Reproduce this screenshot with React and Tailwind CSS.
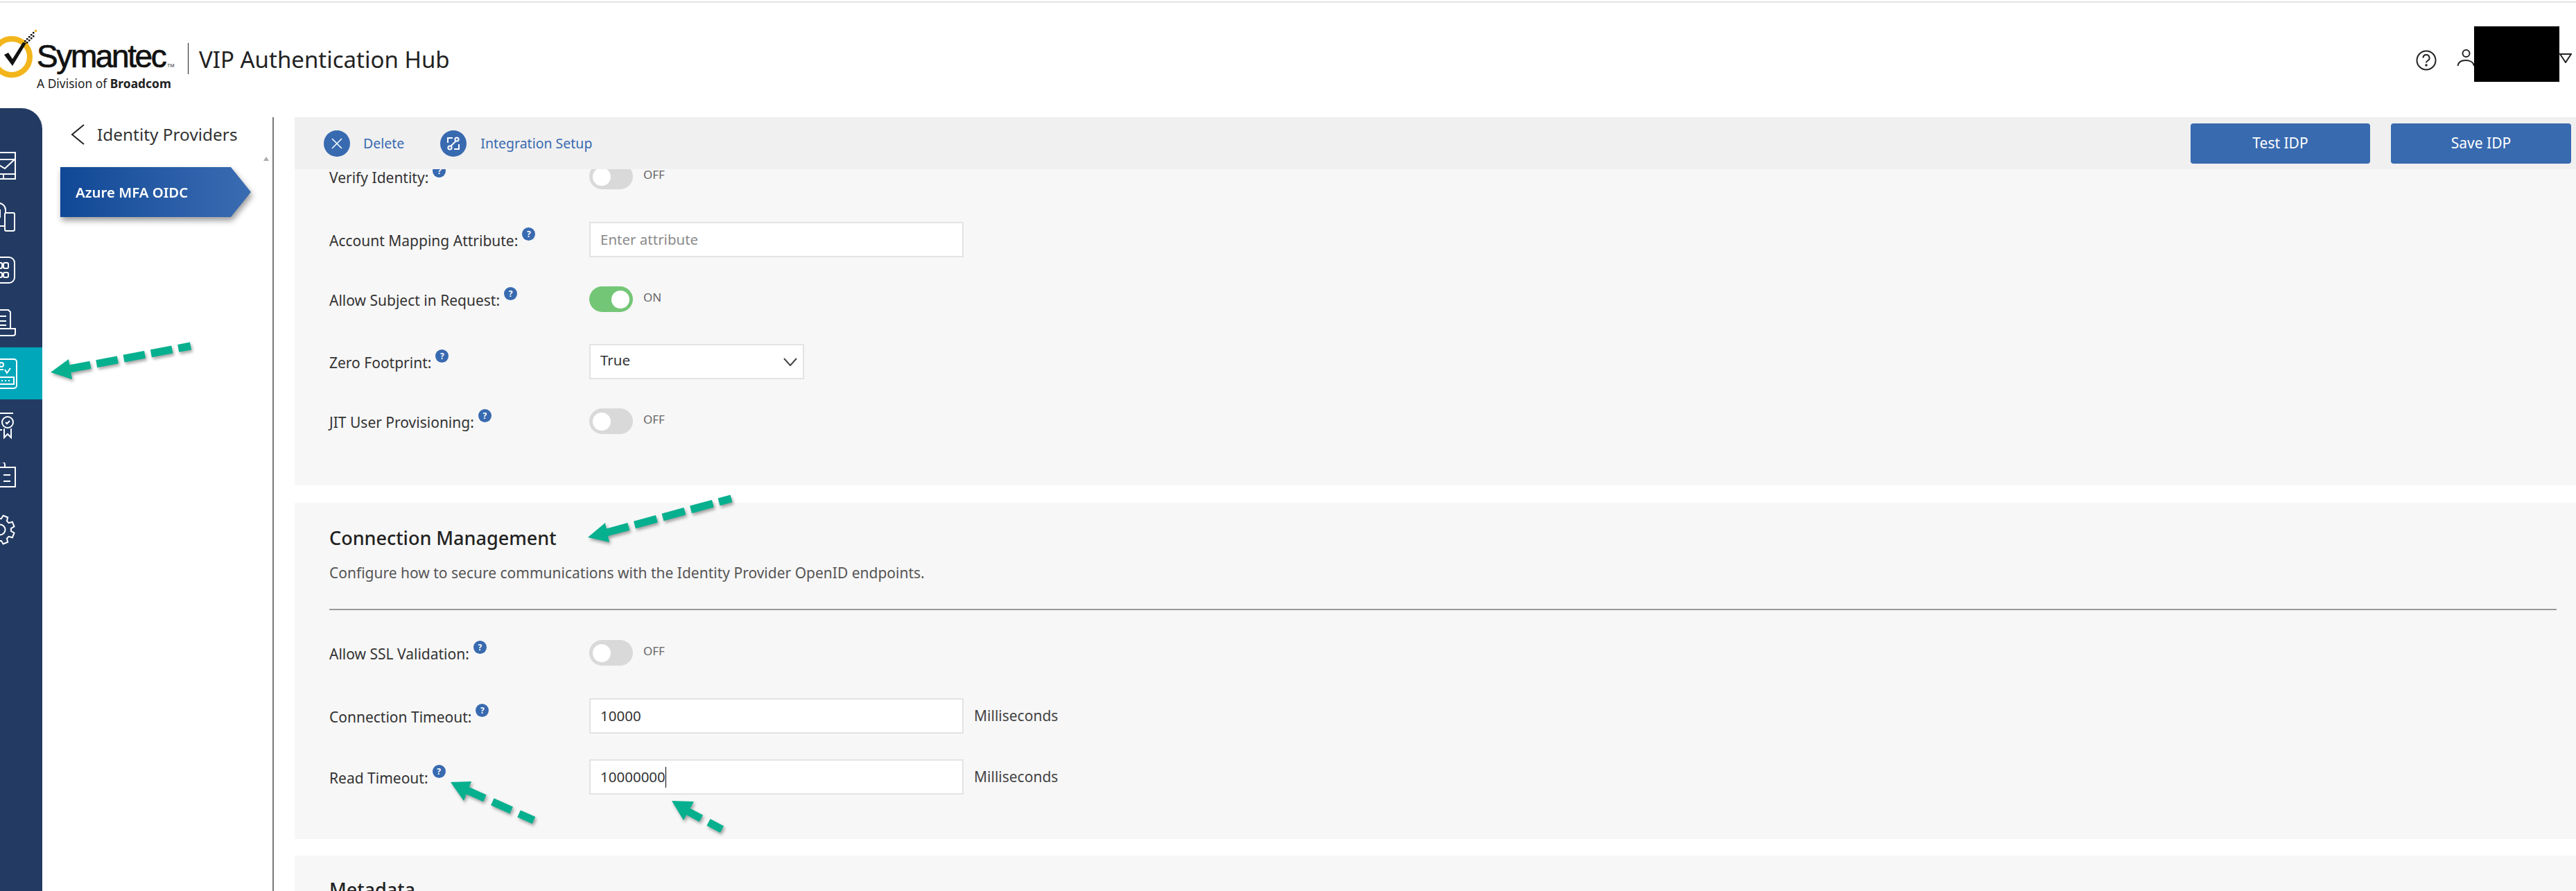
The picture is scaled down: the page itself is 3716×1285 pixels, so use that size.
import React from "react";

const font = { fontFamily: '"Noto Sans", sans-serif' };

const Help = ({ className = "" }) => (
  <span className={`inline-flex h-[19px] w-[19px] shrink-0 items-center justify-center rounded-full bg-[#386ab0] text-[12px] font-bold leading-none text-white ${className}`}>?</span>
);

const Toggle = ({ on }) => (
  <div className="flex items-start gap-[15px]">
    <div className={`flex h-[37px] w-[63px] items-center rounded-full px-[5px] ${on ? "justify-end bg-[#74c677]" : "bg-[#d9d9d9]"}`}>
      <div className="h-[26px] w-[26px] rounded-full bg-white" />
    </div>
    <span className="mt-[6px] text-[17px] leading-[20px] text-[#666]">{on ? "ON" : "OFF"}</span>
  </div>
);

const Field = ({ value, placeholder, unit, caret }) => (
  <div className="flex items-center gap-[15px]">
    <div className={`flex h-[51px] w-[540px] items-center border-2 border-[#e3e3e3] bg-white pl-[14px] text-[20.5px] ${value ? "text-[#333]" : "text-[#8a8a8a]"}`}>
      {value || placeholder}
      {caret && <span className="h-[30px] w-px bg-black" />}
    </div>
    {unit && <span className="text-[21px] text-[#444]">{unit}</span>}
  </div>
);

// label column is fixed so every control starts at the same x
const Row = ({ label, top, children }) => (
  <div className={`flex h-[51px] items-center ${top}`}>
    <div className="flex w-[375px] shrink-0 items-center pt-[4px]">
      <span className="text-[21px] text-[#333]">{label}</span>
      <Help className="mb-[20px] ml-[6px]" />
    </div>
    {children}
  </div>
);

const tail = [[35, 58], [38, 60], [38, 55], [41, 57], [41, 52], [44, 54], [44, 49], [47, 51], [47, 46]];

const Logo = () => (
  <div className="mt-[30px] flex items-center">
    <svg width="53" height="76" viewBox="0 42 53 76" className="-mt-[26px] shrink-0">
      <circle cx="17" cy="82" r="26" fill="none" stroke="#f2b51b" strokeWidth="8" />
      <path d="M6 79l6-3 6 9 15-24 5 1-20 33z" fill="#111" />
      {tail.map(([x, y]) => (
        <rect key={`${x}-${y}`} x={x} y={y} width="2.5" height="2.5" fill="#111" />
      ))}
      <rect x="50" y="43" width="3" height="3" fill="#f2b51b" />
    </svg>
    <div className="flex w-[218px] flex-col">
      <div className="flex items-start">
        <span className="text-[46px] leading-[50px] tracking-[-2.4px] text-[#111] [-webkit-text-stroke:0.7px_#111]" style={{ fontFamily: '"Liberation Sans", sans-serif' }}>Symantec</span>
        <span className="ml-[3px] mt-[34px] text-[7px] text-[#333]">TM</span>
      </div>
      <div className="mt-[4px] text-[17.4px] leading-[20px] text-[#222]">A Division of <b>Broadcom</b></div>
    </div>
    <div className="mb-[17px] h-[45px] w-px bg-[#222]" />
    <div className="mb-[16px] ml-[15px] text-[33px] leading-none text-[#222]">VIP Authentication Hub</div>
  </div>
);

// gear outline for the settings icon, centred on the rail's left edge
const gearPath = Array.from({ length: 8 }, (_, i) => {
  const pt = (r, a) => `${(r * Math.cos(a)).toFixed(1)} ${(22 + r * Math.sin(a)).toFixed(1)}`;
  const a = (i * Math.PI) / 4 + Math.PI / 8;
  const w = 0.17;
  return `${i === 0 ? "M" : "L"}${pt(16, a - w * 1.6)}L${pt(21, a - w)}L${pt(21, a + w)}L${pt(16, a + w * 1.6)}`;
}).join("") + "Z";

// drawn with x = page x, so the part left of 0 is cut off by the window
const icons = [
  <><path d="M-5 3H22V41H-5M-5 13H22M-5 19L7 26L22 12M-5 34H22M5 34V41" /></>,
  <><path d="M-3 1A10 10 0 0 1 8 11V15M0 10V22M-5 34H7" /><rect x="7" y="15" width="14" height="26" rx="2" /></>,
  <><path d="M-5 4H13a8 8 0 0 1 8 8V33a8 8 0 0 1-8 8H-5" /><rect x="5" y="12" width="7" height="8" rx="2" /><rect x="5" y="26" width="7" height="7" rx="2" /><rect x="-4" y="12" width="7" height="8" rx="2" /><rect x="-4" y="26" width="7" height="7" rx="2" /></>,
  <><path d="M-5 5H12l3 3V32M-5 32H22V39a3 3 0 0 1-3 3H-5M-5 14H9M-5 21H9M-5 27H9" /></>,
  <><path d="M-5 1H20a4 4 0 0 1 4 4V39a4 4 0 0 1-4 4H-5" /><circle cx="2" cy="9" r="3" /><path d="M-5 16H5M7 16l3 5 5-7" /><path d="M-5 27H20V37H-5" /><path d="M2 32h2M7 32h2M12 32h2" /></>,
  <><path d="M-5 4H19M-5 28H3" /><circle cx="11" cy="17" r="8" /><path d="M8 17l2 2 4-4M6 26V39L11 34L16 39V26" /></>,
  <><path d="M-3 7V3a5 4 0 0 1 10 0V7M-5 7H22V35H-5M5 18H15M5 27H15" /></>,
  <><circle cx="0" cy="22" r="7.5" /><path d="M0 0" /><path d={gearPath} /></>,
];

const NavItem = ({ icon, active }) => (
  <div className={`flex h-[75px] items-center overflow-hidden ${active ? "bg-[#00a7bb]" : ""}`}>
    <svg width="40" height="44" viewBox="-15 0 40 44" fill="none" stroke="#fff" strokeWidth="2" className="-ml-[15px] shrink-0">{icon}</svg>
  </div>
);

const Arrow = ({ line, head, dash }) => (
  <g className="drop-shadow-[2px_3px_2px_rgba(0,0,0,0.35)]">
    <path d={line} stroke="#06b08f" strokeWidth="11" fill="none" strokeDasharray={dash} />
    <polygon points={head} fill="#06b08f" />
  </g>
);

export default function App() {
  return (
    <div className="relative h-[1285px] w-[3716px] overflow-hidden bg-white" style={font}>
      <div className="mt-[2px] h-[2px] bg-[#e3e3e3]" />

      {/* top bar */}
      <div className="flex h-[152px] items-center justify-between pb-[4px] pr-[6px]">
        <Logo />
        <div className="flex items-center">
          <svg width="30" height="30" viewBox="0 0 30 30" fill="none" stroke="#222" strokeWidth="2" className="mt-[18px]">
            <circle cx="15" cy="15" r="13.5" />
            <path d="M10.5 11.5a4.5 4.5 0 1 1 6.5 4c-1.4.8-2 1.6-2 3" />
            <circle cx="15" cy="22" r=".8" fill="#222" />
          </svg>
          <svg width="25" height="26" viewBox="0 0 25 26" fill="none" stroke="#222" strokeWidth="2" className="ml-[29px] mt-[12px]">
            <circle cx="13.5" cy="6" r="5" />
            <path d="M1.5 24C2 19 6 16 13 16C18 16 24 18 25 24" />
          </svg>
          <div className="h-[80px] w-[123px] bg-black" />
          <svg width="18" height="14" viewBox="0 0 18 14" fill="none" stroke="#222" strokeWidth="2" className="mt-[11px]">
            <path d="M1 1h16L9 13z" />
          </svg>
        </div>
      </div>

      <div className="flex h-[1129px]">
        {/* icon rail */}
        <div className="w-[61px] shrink-0 rounded-tr-[30px] bg-[#233b63] pt-[45px]">
          {icons.map((icon, i) => (
            <NavItem key={i} icon={icon} active={i === 4} />
          ))}
        </div>

        {/* provider list */}
        <div className="mt-[13px] w-[334px] shrink-0 border-r-2 border-[#777]">
          <div className="flex h-[50px] items-center pl-[41px]">
            <svg width="20" height="30" viewBox="0 0 20 30" fill="none" stroke="#222" strokeWidth="2"><path d="M19 1L2 15l17 14" /></svg>
            <span className="ml-[18px] text-[24.4px] text-[#333]">Identity Providers</span>
          </div>
          <div className="flex h-[22px] items-start justify-end pr-[5px] pt-[7px]">
            <div className="h-0 w-0 border-x-[4px] border-b-[6px] border-x-transparent border-b-[#aaa]" />
          </div>
          <div className="ml-[26px] drop-shadow-[2px_5px_4px_rgba(0,0,0,0.4)]">
            <div className="flex h-[72px] w-[275px] items-center bg-gradient-to-r from-[#0f4896] to-[#3a6cb2] pl-[22px] text-[20.4px] font-semibold text-white [clip-path:polygon(0_0,246px_0,100%_50%,246px_100%,0_100%)]">
              Azure MFA OIDC
            </div>
          </div>
        </div>

        {/* main */}
        <div className="ml-[30px] mt-[13px] flex min-w-0 flex-1 flex-col">
          <div className="flex h-[75px] shrink-0 items-center justify-between bg-[#f0f0f0] pl-[42px] pr-[7px]">
            <div className="flex items-center text-[19.5px] text-[#386ab0]">
              <span className="flex h-[38px] w-[38px] items-center justify-center rounded-full bg-[#386ab0]">
                <svg width="18" height="18" viewBox="0 0 18 18" stroke="#fff" strokeWidth="1.5"><path d="M2 2l14 14M16 2L2 16" /></svg>
              </span>
              <span className="ml-[19px]">Delete</span>
              <span className="ml-[52px] flex h-[38px] w-[38px] items-center justify-center rounded-full bg-[#386ab0]">
                <svg width="22" height="22" viewBox="0 0 22 22" fill="none" stroke="#fff" strokeWidth="2">
                  <path d="M10 3H3v7M12 19h7v-7" />
                  <circle cx="16" cy="5" r="2.6" />
                  <circle cx="6" cy="17" r="2.6" />
                  <path d="M14.5 7.5l-7 7" />
                </svg>
              </span>
              <span className="ml-[20px]">Integration Setup</span>
            </div>
            <div className="flex gap-[30px] text-[21px] text-white">
              <button className="h-[58px] w-[259px] rounded-[4px] bg-[#386ab0]">Test IDP</button>
              <button className="h-[58px] w-[260px] rounded-[4px] bg-[#386ab0]">Save IDP</button>
            </div>
          </div>

          <div className="min-h-0 flex-1 overflow-hidden">
            <section className="flow-root h-[456px] bg-[#f7f7f7] pl-[50px]">
              <Row label="Verify Identity:" top="-mt-[15px]"><Toggle /></Row>
              <Row label="Account Mapping Attribute:" top="mt-[40px]"><Field placeholder="Enter attribute" /></Row>
              <Row label="Allow Subject in Request:" top="mt-[35px]"><Toggle on /></Row>
              <Row label="Zero Footprint:" top="mt-[39px]">
                <div className="flex h-[51px] w-[310px] items-start justify-between border-2 border-[#e3e3e3] bg-white pl-[14px] pr-[8px] pt-[6px] text-[20.5px] text-[#333]">
                  True
                  <svg width="20" height="12" viewBox="0 0 20 12" fill="none" stroke="#444" strokeWidth="2" className="mt-[12px]"><path d="M1 1l9 10 9-10" /></svg>
                </div>
              </Row>
              <Row label="JIT User Provisioning:" top="mt-[35px]"><Toggle /></Row>
            </section>

            <section className="mt-[25px] flow-root h-[485px] bg-[#f7f7f7] pl-[50px] pr-[28px] pt-[33px]">
              <h2 className="text-[27px] font-medium leading-[36px] text-[#222]">Connection Management</h2>
              <p className="mt-[19px] text-[21px] leading-[27px] text-[#555]">Configure how to secure communications with the Identity Provider OpenID endpoints.</p>
              <div className="mt-[38px] h-[2px] bg-[#999]" />
              <Row label="Allow SSL Validation:" top="mt-[36px]"><Toggle /></Row>
              <Row label="Connection Timeout:" top="mt-[40px]"><Field value="10000" unit="Milliseconds" /></Row>
              <Row label="Read Timeout:" top="mt-[37px]"><Field value="10000000" unit="Milliseconds" caret /></Row>
            </section>

            <section className="mt-[24px] flow-root h-[100px] bg-[#f7f7f7] pl-[50px] pt-[31px]">
              <h2 className="text-[27px] font-medium leading-[36px] text-[#222]">Metadata</h2>
            </section>
          </div>
        </div>
      </div>

      {/* annotation arrows drawn on top of the screenshot */}
      <svg className="pointer-events-none absolute left-0 top-0" width="3716" height="1285" viewBox="0 0 3716 1285">
        <Arrow line="M100 532L275 499" head="73,537 99,518 104,547" dash="31 9" />
        <Arrow line="M875 768L1055 719" head="848,775 873,754 879,782" dash="33 9" />
        <Arrow line="M672 1139L770 1183" head="650,1128 680,1127 669,1155" dash="30 12" />
        <Arrow line="M992 1170L1043 1197" head="969,1155 1001,1156 986,1183" dash="22 12" />
      </svg>
    </div>
  );
}
